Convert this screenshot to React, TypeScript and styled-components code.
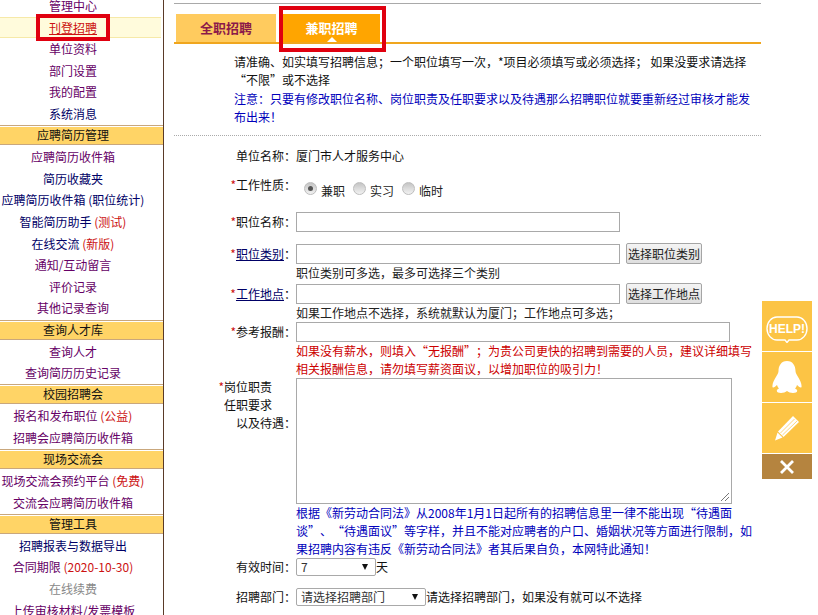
import React from 'react';
import styled, { createGlobalStyle } from 'styled-components';

const GlobalStyle = createGlobalStyle`
  html, body {
    margin: 0;
    padding: 0;
    height: 100%;
    overflow: hidden;
    background: #fff;
    font-family: "Noto Sans CJK SC", "Liberation Sans", sans-serif;
    font-size: 12px;
    color: #111;
  }
`;

const Page = styled.div`
  display: flex;
  height: 615px;
  overflow: hidden;
  position: relative;
`;

// Sidebar
const Sidebar = styled.div`
  width: 163px;
  height: 615px;
  flex: none;
  overflow: hidden;
  border-right: 1px solid #5a3a28;
`;

const SideList = styled.div`
  margin-top: -5px;
`;

const SideLink = styled.div<{ $color?: string }>`
  height: 21.6px;
  line-height: 21.6px;
  padding-right: 17px;
  text-align: center;
  white-space: nowrap;
  font-size: 12px;
  color: ${(p) => p.$color || '#660066'};
`;

const ActiveLink = styled(SideLink)`
  margin-right: 2px;
  padding-right: 15px;
  background: #fffbdc;
  box-shadow: inset 0 1px 0 #f6e9a8, inset 0 -1px 0 #f6e9a8;
  color: #cc1111;
  text-decoration: underline;
`;

const SideHead = styled.div`
  height: 18px;
  line-height: 18px;
  padding-right: 17px;
  text-align: center;
  font-size: 12px;
  color: #111;
  background: #ffd466;
  border-top: 1px solid #c9a77c;
  border-bottom: 1px solid #c9a77c;
  box-shadow: 0 1px 0 #fff inset;
  margin: 0.8px 0;
`;

const Tag = styled.span`
  color: #cc1111;
`;

// Main column
const Main = styled.div`
  width: 587px;
  margin-left: 10px;
  flex: none;
`;

const TopRule = styled.div`
  height: 1px;
  margin-top: 3px;
  background: #a9a9a9;
`;

const Tabs = styled.div`
  display: flex;
  align-items: flex-end;
  gap: 7px;
  height: 38px;
  padding-left: 2px;
  border-bottom: 2px solid #f0a61e;
`;

const Tab = styled.div<{ $active?: boolean }>`
  position: relative;
  width: ${(p) => (p.$active ? '97px' : '100px')};
  height: 28px;
  line-height: 28px;
  text-align: center;
  font-size: 13px;
  font-weight: 700;
  color: ${(p) => (p.$active ? '#fff' : '#8b1a4a')};
  background: ${(p) => (p.$active ? '#ffa500' : '#ffcb5e')};
  ${(p) =>
    p.$active &&
    `
    &::after {
      content: '';
      position: absolute;
      left: 44px;
      bottom: 0;
      border: 5px solid transparent;
      border-top: 0;
      border-bottom: 5px solid #fff;
    }
  `}
`;

const TabMark = styled.div`
  position: absolute;
  left: 279px;
  top: 6px;
  width: 99px;
  height: 38px;
  border: 4px solid #e0000f;
  pointer-events: none;
`;

const LinkMark = styled.div`
  position: absolute;
  left: 36px;
  top: 14px;
  width: 66px;
  height: 19px;
  border: 4px solid #e0000f;
  pointer-events: none;
`;

const Intro = styled.div`
  margin: 9px 0 0 60px;
  width: 520px;
  line-height: 18.3px;
  white-space: nowrap;
`;

const Blue = styled.div`
  color: #0000bb;
`;

// curly quotes take a full cell in the original page
const Q = styled.span`
  display: inline-block;
  width: 12px;
  text-align: center;
`;

const Dotted = styled.div`
  margin-top: 9px;
  border-top: 1px dotted #aaa;
`;

const Row = styled.div<{ $mt?: number }>`
  display: grid;
  grid-template-columns: 122px 1fr;
  margin-top: ${(p) => p.$mt || 0}px;
  line-height: 20px;
`;

const Label = styled.div`
  text-align: right;
  white-space: nowrap;
`;

const Star = styled.span`
  color: #cc1111;
`;

const LabelLink = styled.span`
  color: #000066;
  text-decoration: underline;
`;

const Spaced = styled.div<{ $pad?: number }>`
  line-height: 18px;
  padding-right: ${(p) => p.$pad || 0}px;
`;

const Field = styled.div`
  display: flex;
  align-items: center;
`;

const RadioField = styled(Field)`
  padding-top: 6px;
`;

const Radios = styled.label`
  display: inline-flex;
  align-items: center;
  margin-left: 8px;
  color: #222;
`;

const Radio = styled.span<{ $on?: boolean }>`
  position: relative;
  width: 11px;
  height: 11px;
  margin: 0 4px 6px 0;
  border-radius: 50%;
  background: linear-gradient(#c4c4c4, #f2f2f2);
  border: 1px solid #bdbdbd;
  ${(p) =>
    p.$on &&
    `
    &::after {
      content: '';
      position: absolute;
      left: 3px;
      top: 3px;
      width: 5px;
      height: 5px;
      border-radius: 50%;
      background: #555;
    }
  `}
`;

const TextInput = styled.div<{ $w: number }>`
  box-sizing: border-box;
  width: ${(p) => p.$w}px;
  height: 20px;
  background: #fff;
  border: 1px solid #a9a9a9;
  flex: none;
`;

const PickButton = styled.div`
  box-sizing: border-box;
  width: 76px;
  height: 21px;
  margin: -2px 0 0 6px;
  line-height: 19px;
  text-align: center;
  color: #222;
  background: linear-gradient(#f4f4f4, #dedede);
  border: 1px solid #a5a5a5;
  border-radius: 2px;
`;

const Hint = styled.div`
  line-height: 18px;
  white-space: nowrap;
  color: #222;
`;

const RedNote = styled.div`
  line-height: 18px;
  white-space: nowrap;
  color: #cc0000;
`;

const BlueNote = styled.div`
  line-height: 18px;
  white-space: nowrap;
  color: #0000bb;
`;

const AreaBox = styled.div`
  position: relative;
  box-sizing: border-box;
  width: 436px;
  height: 126px;
  border: 1px solid #a9a9a9;
  background: #fff;
`;

const Grip = styled.svg`
  position: absolute;
  right: 1px;
  bottom: 1px;
`;

const Select = styled.div<{ $w: number }>`
  box-sizing: border-box;
  display: flex;
  align-items: center;
  justify-content: space-between;
  flex: none;
  width: ${(p) => p.$w}px;
  height: 18px;
  padding: 0 4px 0 4px;
  line-height: 16px;
  color: #333;
  background: #fff;
  border: 1px solid #a9a9a9;
  border-radius: 2px;
`;

const Caret = styled.span`
  width: 0;
  height: 0;
  margin-right: 3px;
  border: 3.5px solid transparent;
  border-top: 6px solid #111;
  border-bottom: 0;
`;

// Floating help widget
const Float = styled.div`
  position: absolute;
  left: 762px;
  top: 301px;
  width: 50px;
  display: flex;
  flex-direction: column;
  gap: 1px;
`;

const FloatCell = styled.div<{ $dark?: boolean }>`
  height: ${(p) => (p.$dark ? '25px' : '50px')};
  display: flex;
  align-items: center;
  justify-content: center;
  background: ${(p) => (p.$dark ? '#b5843f' : '#fcc445')};
`;

const side = (
  <SideList>
    <SideLink>管理中心</SideLink>
    <ActiveLink>刊登招聘</ActiveLink>
    <SideLink>单位资料</SideLink>
    <SideLink>部门设置</SideLink>
    <SideLink>我的配置</SideLink>
    <SideLink $color="#000066">系统消息</SideLink>
    <SideHead>应聘简历管理</SideHead>
    <SideLink>应聘简历收件箱</SideLink>
    <SideLink $color="#000066">简历收藏夹</SideLink>
    <SideLink $color="#000066">应聘简历收件箱 (职位统计)</SideLink>
    <SideLink $color="#000066">智能简历助手 <Tag>(测试)</Tag></SideLink>
    <SideLink $color="#000066">在线交流 <Tag>(新版)</Tag></SideLink>
    <SideLink>通知/互动留言</SideLink>
    <SideLink>评价记录</SideLink>
    <SideLink>其他记录查询</SideLink>
    <SideHead>查询人才库</SideHead>
    <SideLink>查询人才</SideLink>
    <SideLink>查询简历历史记录</SideLink>
    <SideHead>校园招聘会</SideHead>
    <SideLink>报名和发布职位 <Tag>(公益)</Tag></SideLink>
    <SideLink>招聘会应聘简历收件箱</SideLink>
    <SideHead>现场交流会</SideHead>
    <SideLink>现场交流会预约平台 <Tag>(免费)</Tag></SideLink>
    <SideLink>交流会应聘简历收件箱</SideLink>
    <SideHead>管理工具</SideHead>
    <SideLink $color="#000066">招聘报表与数据导出</SideLink>
    <SideLink>合同期限 <Tag>(2020-10-30)</Tag></SideLink>
    <SideLink $color="#888">在线续费</SideLink>
    <SideLink>上传审核材料/发票模板</SideLink>
  </SideList>
);

const App = () => (
  <>
    <GlobalStyle />
    <Page>
      <Sidebar>{side}</Sidebar>
      <LinkMark />
      <Main>
        <TopRule />
        <Tabs>
          <Tab>全职招聘</Tab>
          <Tab $active>兼职招聘</Tab>
        </Tabs>
        <Intro>
          请准确、如实填写招聘信息；一个职位填写一次，*项目必须填写或必须选择； 如果没要求请选择
          <br />
          <Q>“</Q>不限<Q>”</Q>或不选择
          <Blue>
            注意：只要有修改职位名称、岗位职责及任职要求以及待遇那么招聘职位就要重新经过审核才能发
            <br />
            布出来！
          </Blue>
        </Intro>
        <Dotted />

        <Row $mt={10}>
          <Label>单位名称：</Label>
          <Field>厦门市人才服务中心</Field>
        </Row>
        <Row $mt={9}>
          <Label><Star>*</Star>工作性质：</Label>
          <RadioField>
            <Radios><Radio $on />兼职</Radios>
            <Radios><Radio />实习</Radios>
            <Radios><Radio />临时</Radios>
          </RadioField>
        </Row>
        <Row $mt={11}>
          <Label><Star>*</Star>职位名称：</Label>
          <Field><TextInput $w={324} /></Field>
        </Row>
        <Row $mt={12}>
          <Label><Star>*</Star><LabelLink>职位类别</LabelLink>：</Label>
          <Field><TextInput $w={324} /><PickButton>选择职位类别</PickButton></Field>
        </Row>
        <Row>
          <span />
          <Hint>职位类别可多选，最多可选择三个类别</Hint>
        </Row>
        <Row $mt={2}>
          <Label><Star>*</Star><LabelLink>工作地点</LabelLink>：</Label>
          <Field><TextInput $w={324} /><PickButton>选择工作地点</PickButton></Field>
        </Row>
        <Row>
          <span />
          <Hint>如果工作地点不选择，系统就默认为厦门；工作地点可多选；</Hint>
        </Row>
        <Row>
          <Label><Star>*</Star>参考报酬：</Label>
          <Field><TextInput $w={434} /></Field>
        </Row>
        <Row>
          <span />
          <RedNote>
            如果没有薪水，则填入<Q>“</Q>无报酬<Q>”</Q>；为贵公司更快的招聘到需要的人员，建议详细填写
            <br />
            相关报酬信息，请勿填写薪资面议，以增加职位的吸引力！
          </RedNote>
        </Row>
        <Row>
          <Label>
            <Spaced $pad={24}><Star>*</Star>岗位职责</Spaced>
            <Spaced $pad={24}>任职要求</Spaced>
            <Spaced>以及待遇：</Spaced>
          </Label>
          <AreaBox>
            <Grip width="11" height="11" viewBox="0 0 11 11">
              <path d="M10 2 L2 10 M10 6 L6 10" stroke="#777" strokeWidth="1" />
            </Grip>
          </AreaBox>
        </Row>
        <Row>
          <span />
          <BlueNote>
            根据《新劳动合同法》从2008年1月1日起所有的招聘信息里一律不能出现<Q>“</Q>待遇面
            <br />
            谈<Q>”</Q>、<Q>“</Q>待遇面议<Q>”</Q>等字样，并且不能对应聘者的户口、婚姻状况等方面进行限制，如
            <br />
            果招聘内容有违反《新劳动合同法》者其后果自负，本网特此通知！
          </BlueNote>
        </Row>
        <Row $mt={-1}>
          <Label>有效时间：</Label>
          <Field><Select $w={80}>7<Caret /></Select>天</Field>
        </Row>
        <Row $mt={10}>
          <Label>招聘部门：</Label>
          <Field><Select $w={130}>请选择招聘部门<Caret /></Select>请选择招聘部门，如果没有就可以不选择</Field>
        </Row>
      </Main>
      <TabMark />

      <Float>
        <FloatCell>
          <svg width="44" height="34" viewBox="0 0 44 34">
            <path d="M12 8 H32 A10 11.5 0 0 1 32 31 H24 L22 33.5 L20 31 H12 A10 11.5 0 0 1 12 8 Z" fill="none" stroke="#fff" strokeWidth="1.4" />
            <text x="22" y="24" textAnchor="middle" fill="#fff" fontSize="12" fontWeight="700" fontFamily="Liberation Sans">HELP!</text>
          </svg>
        </FloatCell>
        <FloatCell>
          <svg width="30" height="32" viewBox="0 0 30 32">
            <path d="M15 0 C9 0 6.5 5 6.5 10 C6.5 12 5.5 13 4.5 15 C2 19 0 23 0.5 26 C1 27.5 3.5 25.5 5 24 C5.5 26 6.5 27 7 27.5 C4.5 28.5 4 30.5 6 31.5 C8.5 32.5 13 32 15 30 C17 32 21.5 32.5 24 31.5 C26 30.5 25.5 28.5 23 27.5 C23.5 27 24.5 26 25 24 C26.5 25.5 29 27.5 29.5 26 C30 23 28 19 25.5 15 C24.5 13 23.5 12 23.5 10 C23.5 5 21 0 15 0 Z" fill="#fff" />
          </svg>
        </FloatCell>
        <FloatCell>
          <svg width="24" height="26" viewBox="0 0 24 26">
            <path d="M18 1 L24 7 L8.5 22 L3 16.5 Z" fill="#fff" />
            <path d="M19.5 4 L5.5 18 M22 6 L7.5 20" stroke="#fcc445" strokeWidth="0.7" />
            <path d="M2.5 17.5 L7.5 22.5 L0 25.5 Z" fill="#fff" />
          </svg>
        </FloatCell>
        <FloatCell $dark>
          <svg width="16" height="16" viewBox="0 0 16 16">
            <path d="M2 2 L14 14 M14 2 L2 14" stroke="#fff" strokeWidth="2.8" />
          </svg>
        </FloatCell>
      </Float>
    </Page>
  </>
);

export default App;
